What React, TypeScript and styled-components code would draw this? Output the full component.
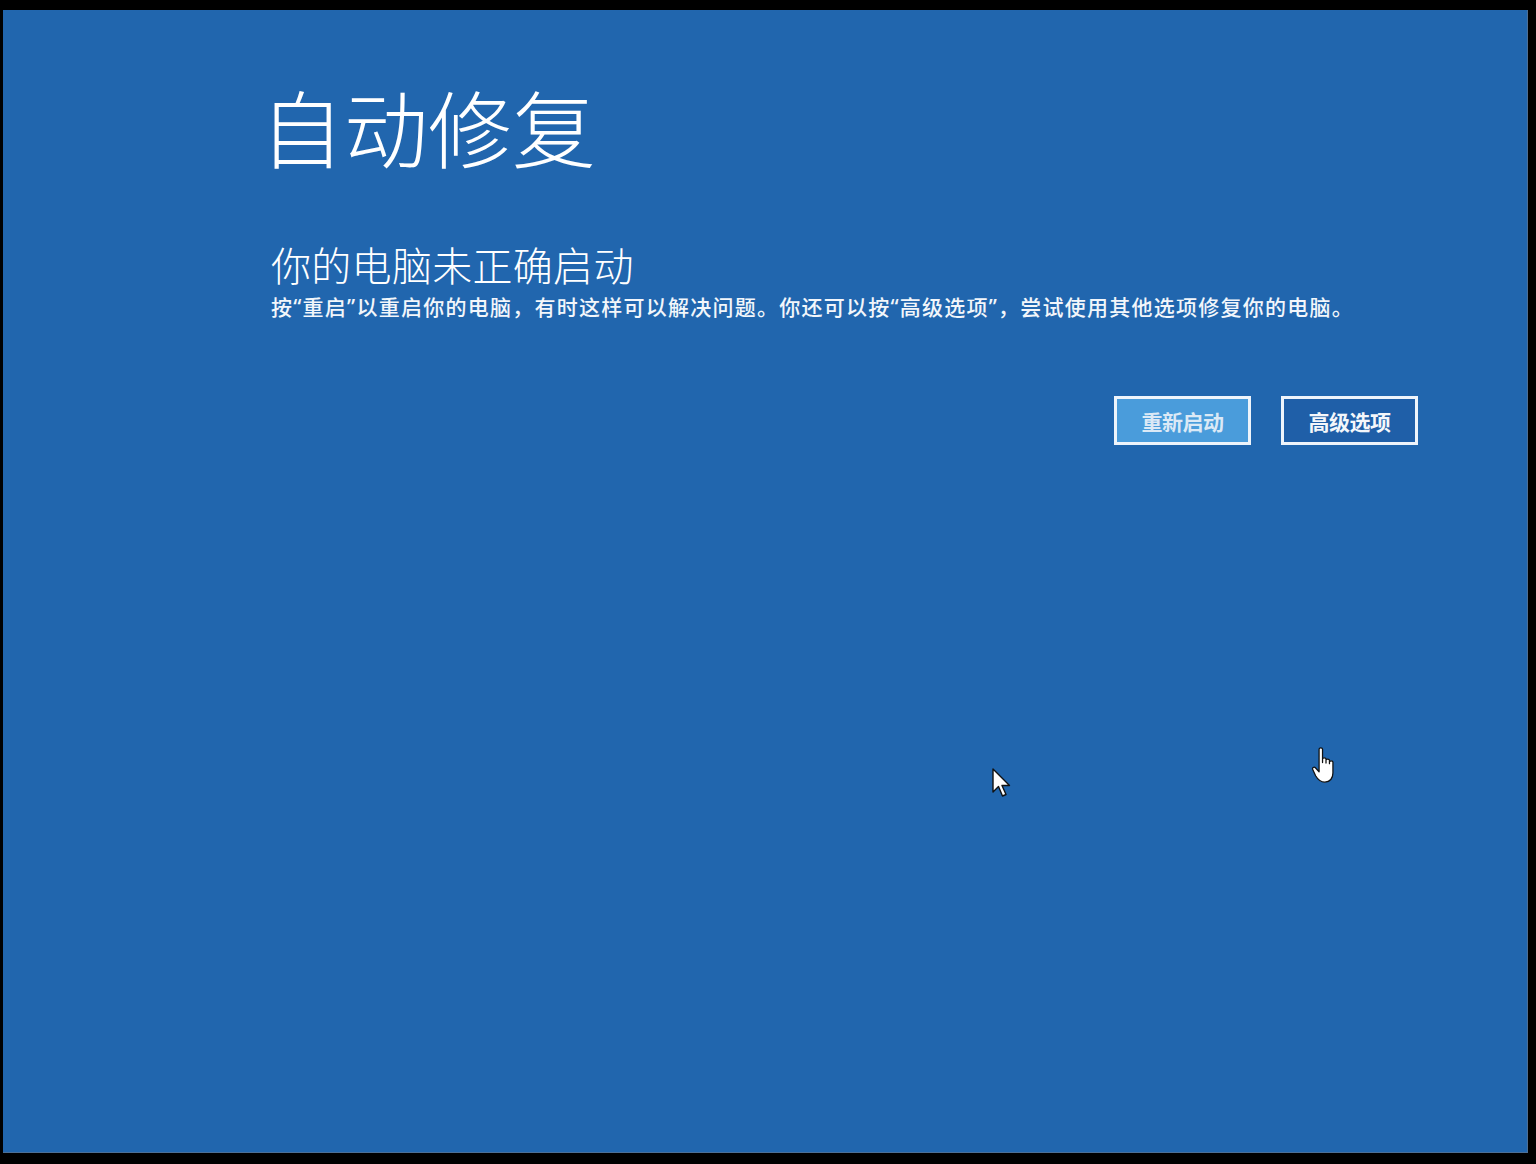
import styled, { createGlobalStyle } from 'styled-components';

const GlobalStyle = createGlobalStyle`
  html, body {
    margin: 0;
    padding: 0;
    background: #000;
  }
  body {
    font-family: 'Noto Sans CJK SC', 'Noto Sans', sans-serif;
  }
`;

const Frame = styled.div`
  width: 1536px;
  height: 1164px;
  background: #000;
  padding: 10px 8px 11px 3px;
  box-sizing: border-box;
`;

const Screen = styled.main`
  position: relative;
  width: 1525px;
  height: 1143px;
  background: #2166ae;
  box-shadow: inset -1px -1px 0 #4d6f96;
  padding: 56px 110px 0 262px;
  box-sizing: border-box;
  display: flex;
  flex-direction: column;
  color: #fff;
`;

const Title = styled.h1`
  margin: 0 0 0 -5px;
  font-size: 84px;
  font-weight: 300;
  line-height: 120px;
`;

const Subtitle = styled.h2`
  margin: 50px 0 0 6px;
  font-size: 40px;
  font-weight: 300;
  line-height: 56px;
  letter-spacing: 0.3px;
`;

const Message = styled.p`
  margin: 0 0 0 6px;
  font-family: 'Noto Sans', 'Noto Sans CJK SC', sans-serif;
  font-size: 21px;
  font-weight: 500;
  line-height: 30px;
  letter-spacing: 1.25px;
  color: #f2f6fb;
`;

const Actions = styled.div`
  display: flex;
  justify-content: flex-end;
  gap: 30px;
  margin-top: 74px;
`;

const Button = styled.button<{ $primary?: boolean }>`
  width: 137px;
  height: 49px;
  box-sizing: border-box;
  border: 3px solid #eef4fb;
  background: ${({ $primary }) => ($primary ? '#4a9cdb' : '#1f5fa8')};
  color: ${({ $primary }) => ($primary ? '#dbe9f6' : '#f4f7fb')};
  font-family: inherit;
  font-size: 21px;
  font-weight: 700;
  letter-spacing: -0.5px;
  padding: 0;
  cursor: default;
`;

const Cursor = styled.svg<{ $x: number; $y: number }>`
  position: absolute;
  left: ${({ $x }) => $x}px;
  top: ${({ $y }) => $y}px;
`;

export default function App() {
  return (
    <>
      <GlobalStyle />
      <Frame>
        <Screen>
          <Title>自动修复</Title>
          <Subtitle>你的电脑未正确启动</Subtitle>
          <Message>
            按“重启”以重启你的电脑，有时这样可以解决问题。你还可以按“高级选项”，尝试使用其他选项修复你的电脑。
          </Message>
          <Actions>
            <Button $primary>重新启动</Button>
            <Button>高级选项</Button>
          </Actions>
          <Cursor $x={989} $y={758} width="22" height="34" viewBox="0 0 22 34">
            <path
              d="M1 1 L1 24 L6.5 18.5 L10.5 28 L14 26.5 L10 17.5 L17.5 17.5 Z"
              fill="#fff"
              stroke="#111"
              strokeWidth="1.4"
              strokeLinejoin="round"
            />
          </Cursor>
          <Cursor $x={1308} $y={736} width="30" height="40" viewBox="0 0 26 34">
            <path
              d="M7 2.5 C7 1 10 1 10 2.5 L10 14 L10 11 C10 9.6 13 9.6 13 11 L13 14.5 L13 12 C13 10.6 16 10.6 16 12 L16 15 L16 13.5 C16 12.2 19 12.2 19 13.5 L19 23 C19 27.5 16.5 31 12 31 C8 31 6 29 4 25.5 L1.5 20 C0.8 18.6 2.6 17.3 3.8 18.5 L7 22 Z"
              fill="#fff"
              stroke="#111"
              strokeWidth="1.1"
              strokeLinejoin="round"
            />
          </Cursor>
        </Screen>
      </Frame>
    </>
  );
}
